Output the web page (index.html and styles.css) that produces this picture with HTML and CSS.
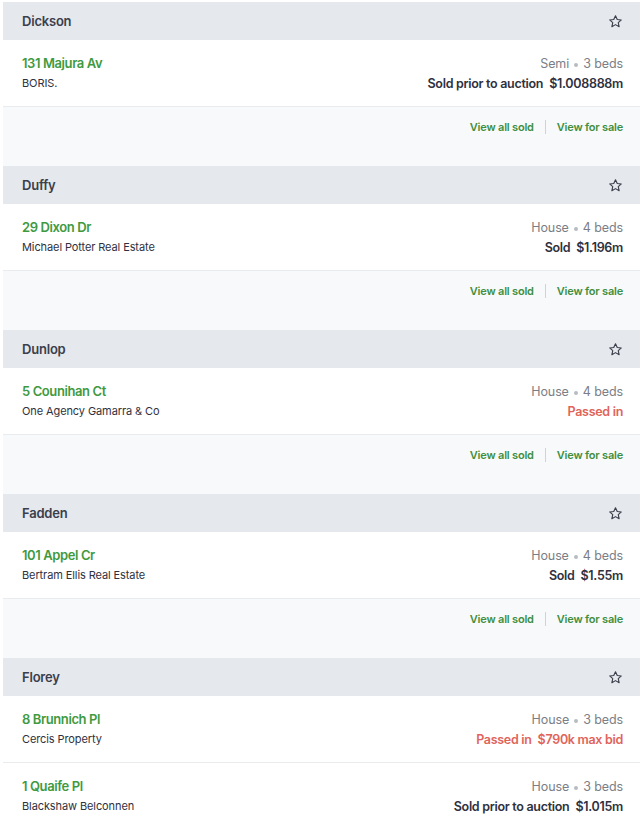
FILE: index.html
```html
<!DOCTYPE html>
<html>
<head>
<meta charset="utf-8">
<link rel="stylesheet" href="styles.css">
</head>
<body>
<div class="list">

  <section class="suburb">
    <header class="suburb-head">
      <span class="suburb-name">Dickson</span>
      <svg class="star" viewBox="0 0 24 24"><path d="M12 2.8l2.8 6 6.5.7-4.9 4.4 1.4 6.4L12 17l-5.8 3.3 1.4-6.4-4.9-4.4 6.5-.7z"/></svg>
    </header>
    <div class="sale">
      <div class="left"><div class="addr">131 Majura Av</div><div class="agent">BORIS.</div></div>
      <div class="right"><div class="type">Semi<span class="dot"></span>3 beds</div><div class="price">Sold prior to auction<span class="gap"></span>$1.008888m</div></div>
    </div>
    <footer class="links"><a>View all sold</a><span class="sep"></span><a>View for sale</a></footer>
  </section>

  <section class="suburb">
    <header class="suburb-head">
      <span class="suburb-name">Duffy</span>
      <svg class="star" viewBox="0 0 24 24"><path d="M12 2.8l2.8 6 6.5.7-4.9 4.4 1.4 6.4L12 17l-5.8 3.3 1.4-6.4-4.9-4.4 6.5-.7z"/></svg>
    </header>
    <div class="sale">
      <div class="left"><div class="addr">29 Dixon Dr</div><div class="agent">Michael Potter Real Estate</div></div>
      <div class="right"><div class="type">House<span class="dot"></span>4 beds</div><div class="price">Sold<span class="gap"></span>$1.196m</div></div>
    </div>
    <footer class="links"><a>View all sold</a><span class="sep"></span><a>View for sale</a></footer>
  </section>

  <section class="suburb">
    <header class="suburb-head">
      <span class="suburb-name">Dunlop</span>
      <svg class="star" viewBox="0 0 24 24"><path d="M12 2.8l2.8 6 6.5.7-4.9 4.4 1.4 6.4L12 17l-5.8 3.3 1.4-6.4-4.9-4.4 6.5-.7z"/></svg>
    </header>
    <div class="sale">
      <div class="left"><div class="addr">5 Counihan Ct</div><div class="agent">One Agency Gamarra &amp; Co</div></div>
      <div class="right"><div class="type">House<span class="dot"></span>4 beds</div><div class="price passed">Passed in</div></div>
    </div>
    <footer class="links"><a>View all sold</a><span class="sep"></span><a>View for sale</a></footer>
  </section>

  <section class="suburb">
    <header class="suburb-head">
      <span class="suburb-name">Fadden</span>
      <svg class="star" viewBox="0 0 24 24"><path d="M12 2.8l2.8 6 6.5.7-4.9 4.4 1.4 6.4L12 17l-5.8 3.3 1.4-6.4-4.9-4.4 6.5-.7z"/></svg>
    </header>
    <div class="sale">
      <div class="left"><div class="addr">101 Appel Cr</div><div class="agent">Bertram Ellis Real Estate</div></div>
      <div class="right"><div class="type">House<span class="dot"></span>4 beds</div><div class="price">Sold<span class="gap"></span>$1.55m</div></div>
    </div>
    <footer class="links"><a>View all sold</a><span class="sep"></span><a>View for sale</a></footer>
  </section>

  <section class="suburb">
    <header class="suburb-head">
      <span class="suburb-name">Florey</span>
      <svg class="star" viewBox="0 0 24 24"><path d="M12 2.8l2.8 6 6.5.7-4.9 4.4 1.4 6.4L12 17l-5.8 3.3 1.4-6.4-4.9-4.4 6.5-.7z"/></svg>
    </header>
    <div class="sale">
      <div class="left"><div class="addr">8 Brunnich Pl</div><div class="agent">Cercis Property</div></div>
      <div class="right"><div class="type">House<span class="dot"></span>3 beds</div><div class="price passed">Passed in<span class="gap"></span>$790k max bid</div></div>
    </div>
    <div class="sale">
      <div class="left"><div class="addr">1 Quaife Pl</div><div class="agent">Blackshaw Belconnen</div></div>
      <div class="right"><div class="type">House<span class="dot"></span>3 beds</div><div class="price">Sold prior to auction<span class="gap"></span>$1.015m</div></div>
    </div>
    <footer class="links"><a>View all sold</a><span class="sep"></span><a>View for sale</a></footer>
  </section>

</div>
</body>
</html>
```

FILE: styles.css
```css
* { box-sizing: border-box; }
html, body { margin: 0; padding: 0; background: #ffffff; }
body {
  font-family: Inter, "Noto Sans", sans-serif;
  color: #2f3140;
  padding: 2px 4px 0 3px;
}
.list { display: flex; flex-direction: column; }
.suburb { background: #f8f9fb; }
.suburb-head {
  height: 38px;
  background: #e5e8ec;
  display: flex;
  align-items: center;
  justify-content: space-between;
  padding: 0 17px 0 19px;
}
.suburb-name {
  font-size: 13px;
  font-weight: 600;
  color: #3b3e4d;
  letter-spacing: -0.2px;
}
.star {
  width: 15px;
  height: 15px;
  fill: none;
  stroke: #3a3d4a;
  stroke-width: 1.8;
  stroke-linejoin: round;
}
.sale {
  background: #ffffff;
  display: flex;
  justify-content: space-between;
  align-items: flex-start;
  height: 67px;
  padding: 13px 17px 0 19px;
  border-bottom: 1px solid #e9ecef;
  line-height: 20px;
}
.addr {
  font-size: 13px;
  font-weight: 600;
  color: #3f9a3f;
  letter-spacing: -0.4px;
}
.agent {
  font-size: 11px;
  color: #2f3140;
  letter-spacing: -0.1px;
}
.right { text-align: right; padding-top: 1px; }
.type {
  font-size: 12.5px;
  color: #7b7e86;
  letter-spacing: -0.1px;
  height: 20px;
  display: flex;
  align-items: center;
  justify-content: flex-end;
}
.dot {
  display: inline-block;
  width: 4px;
  height: 4px;
  border-radius: 50%;
  background: #b8bbc0;
  margin: 1px 5px 0;
}
.price {
  font-size: 12.5px;
  font-weight: 600;
  color: #2f3140;
  letter-spacing: -0.3px;
  height: 20px;
}
.gap { display: inline-block; width: 6px; }
.price.passed { color: #e0645a; }
.links {
  display: flex;
  justify-content: flex-end;
  align-items: center;
  height: 59px;
  padding: 10px 17px 29px 19px;
  line-height: 20px;
}
.links a {
  font-size: 11px;
  font-weight: 600;
  color: #3f8f3f;
  letter-spacing: -0.2px;
}
.sep {
  width: 1px;
  height: 14px;
  background: #cfd3d8;
  margin: 0 11px;
}
```
